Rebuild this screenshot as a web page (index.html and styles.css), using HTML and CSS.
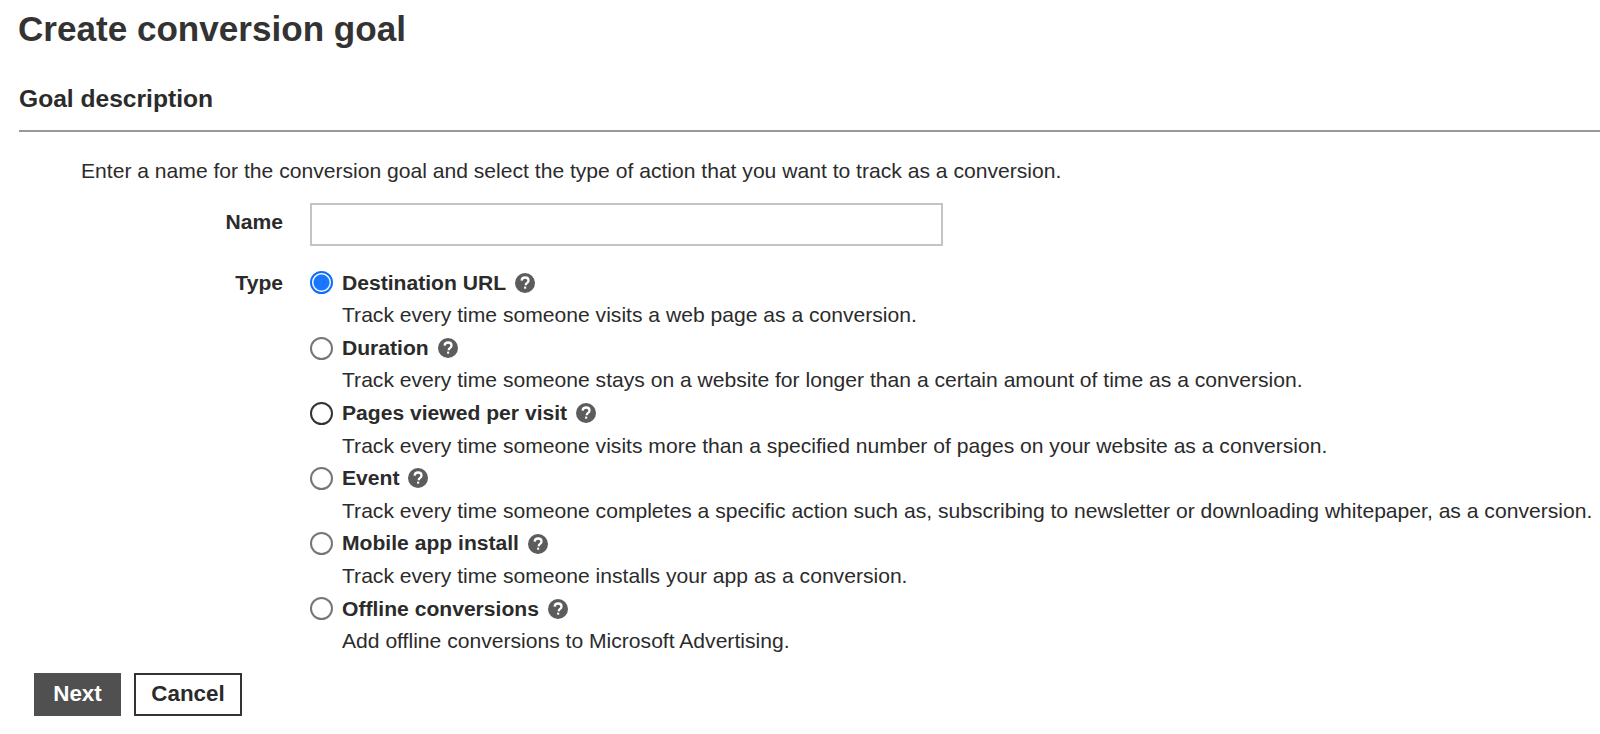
FILE: index.html
```html
<!DOCTYPE html>
<html lang="en">

<head>
    <meta charset="UTF-8">
    <title>Create conversion goal</title>
    <link rel="stylesheet" href="styles.css">
</head>

<body>
    <h1 class="page-title">Create conversion goal</h1>
    <h2 class="section-title">Goal description</h2>

    <p class="intro">Enter a name for the conversion goal and select the type of action that you want to track as a conversion.</p>

    <div class="field field-name">
        <label class="field-label" for="goalName">Name</label>
        <input class="text-input" type="text" id="goalName">
    </div>

    <div class="field">
        <div class="field-label">Type</div>
        <div class="options">
            <div class="option">
                <span class="radio radio-on"></span>
                <div class="option-title">Destination URL
                    <svg class="help" viewBox="0 0 20 20"><circle cx="10" cy="10" r="10"/><path d="M6.6 7.6C6.8 5.6 8.2 4.5 10.1 4.5c2 0 3.4 1.2 3.4 2.9 0 1.3-.7 2-1.7 2.7-.8.6-1 .9-1 1.7v.4" /><rect x="9.1" y="13.6" width="2.1" height="2.1"/></svg>
                </div>
                <div class="option-desc">Track every time someone visits a web page as a conversion.</div>
            </div>
            <div class="option">
                <span class="radio radio-soft"></span>
                <div class="option-title">Duration
                    <svg class="help" viewBox="0 0 20 20"><circle cx="10" cy="10" r="10"/><path d="M6.6 7.6C6.8 5.6 8.2 4.5 10.1 4.5c2 0 3.4 1.2 3.4 2.9 0 1.3-.7 2-1.7 2.7-.8.6-1 .9-1 1.7v.4" /><rect x="9.1" y="13.6" width="2.1" height="2.1"/></svg>
                </div>
                <div class="option-desc">Track every time someone stays on a website for longer than a certain amount of time as a conversion.</div>
            </div>
            <div class="option">
                <span class="radio"></span>
                <div class="option-title">Pages viewed per visit
                    <svg class="help" viewBox="0 0 20 20"><circle cx="10" cy="10" r="10"/><path d="M6.6 7.6C6.8 5.6 8.2 4.5 10.1 4.5c2 0 3.4 1.2 3.4 2.9 0 1.3-.7 2-1.7 2.7-.8.6-1 .9-1 1.7v.4" /><rect x="9.1" y="13.6" width="2.1" height="2.1"/></svg>
                </div>
                <div class="option-desc">Track every time someone visits more than a specified number of pages on your website as a conversion.</div>
            </div>
            <div class="option">
                <span class="radio radio-soft"></span>
                <div class="option-title">Event
                    <svg class="help" viewBox="0 0 20 20"><circle cx="10" cy="10" r="10"/><path d="M6.6 7.6C6.8 5.6 8.2 4.5 10.1 4.5c2 0 3.4 1.2 3.4 2.9 0 1.3-.7 2-1.7 2.7-.8.6-1 .9-1 1.7v.4" /><rect x="9.1" y="13.6" width="2.1" height="2.1"/></svg>
                </div>
                <div class="option-desc">Track every time someone completes a specific action such as, subscribing to newsletter or downloading whitepaper, as a conversion.</div>
            </div>
            <div class="option">
                <span class="radio radio-soft"></span>
                <div class="option-title">Mobile app install
                    <svg class="help" viewBox="0 0 20 20"><circle cx="10" cy="10" r="10"/><path d="M6.6 7.6C6.8 5.6 8.2 4.5 10.1 4.5c2 0 3.4 1.2 3.4 2.9 0 1.3-.7 2-1.7 2.7-.8.6-1 .9-1 1.7v.4" /><rect x="9.1" y="13.6" width="2.1" height="2.1"/></svg>
                </div>
                <div class="option-desc">Track every time someone installs your app as a conversion.</div>
            </div>
            <div class="option">
                <span class="radio radio-soft"></span>
                <div class="option-title">Offline conversions
                    <svg class="help" viewBox="0 0 20 20"><circle cx="10" cy="10" r="10"/><path d="M6.6 7.6C6.8 5.6 8.2 4.5 10.1 4.5c2 0 3.4 1.2 3.4 2.9 0 1.3-.7 2-1.7 2.7-.8.6-1 .9-1 1.7v.4" /><rect x="9.1" y="13.6" width="2.1" height="2.1"/></svg>
                </div>
                <div class="option-desc">Add offline conversions to Microsoft Advertising.</div>
            </div>
        </div>
    </div>

    <div class="actions">
        <button class="button button-primary" type="button">Next</button>
        <button class="button" type="button">Cancel</button>
    </div>
</body>

</html>
```

FILE: styles.css
```css
/* General Page Styles */
html {
    overflow: hidden;
}

body {
    font-family: 'Liberation Sans', Arial, sans-serif;
    font-size: 21.1px;
    line-height: 32.6px;
    background-color: #fff;
    color: #2b2b2b;
    margin: 0;
    padding: 0;
    height: 734px;
    overflow: hidden;
}

/* Headings */
.page-title {
    font-size: 35.1px;
    line-height: 40px;
    font-weight: bold;
    color: #333;
    margin: 9px 0 0 18px;
}

.section-title {
    font-size: 24.6px;
    line-height: 30px;
    font-weight: bold;
    margin: 35px 0 0 19px;
    padding-bottom: 16px;
    border-bottom: 2px solid #999;
}

.intro {
    margin: 23px 0 0 81px;
    white-space: nowrap;
}

/* Form rows */
.field {
    display: flex;
    align-items: flex-start;
}

.field-name {
    align-items: center;
    margin-top: 15px;
    margin-bottom: 21px;
}

.field-name .field-label {
    padding-bottom: 4px;
}

.field-label {
    width: 283px;
    flex: none;
    text-align: right;
    font-weight: bold;
    margin-right: 27px;
}

.text-input {
    width: 633px;
    height: 43px;
    box-sizing: border-box;
    border: 2px solid #c4c4c4;
    background: #fff;
    padding: 0;
    margin: 0;
}

/* Radio options */
.options {
    flex: 1;
    min-width: 0;
}

.option {
    display: grid;
    grid-template-columns: 32px auto;
    white-space: nowrap;
}

.radio {
    width: 23px;
    height: 23px;
    box-sizing: border-box;
    border: 2px solid #333;
    border-radius: 50%;
    align-self: center;
}

.radio-soft {
    border-color: #767676;
}

.radio-on {
    border-color: #0b6ffb;
    background: radial-gradient(circle, #1a76ff 0 7.5px, #fff 8.5px);
}

.option-title {
    font-weight: bold;
    display: flex;
    align-items: center;
    gap: 9px;
}

.option-desc {
    grid-column: 2;
}

.help {
    width: 20px;
    height: 20px;
    flex: none;
}

.help circle {
    fill: #5c5c5c;
}

.help path {
    fill: none;
    stroke: #fff;
    stroke-width: 2.3;
}

.help rect {
    fill: #fff;
}

/* Buttons */
.actions {
    display: flex;
    gap: 13px;
    margin: 15px 0 0 34px;
}

.button {
    height: 43px;
    width: 108px;
    padding: 0;
    font-family: inherit;
    font-size: 22.4px;
    font-weight: bold;
    color: #2b2b2b;
    background-color: #fff;
    border: 2px solid #333;
}

.button-primary {
    width: 87px;
    color: #fff;
    background-color: #505050;
    border-color: #505050;
}
```
